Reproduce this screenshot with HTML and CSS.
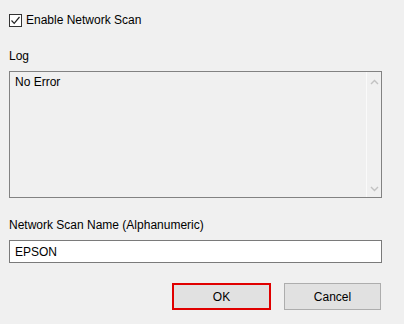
FILE: index.html
```html
<!DOCTYPE html>
<html>
<head>
<meta charset="utf-8">
<link rel="stylesheet" href="styles.css">
</head>
<body>
<div class="dialog">
  <label class="check-row">
    <span class="checkbox">
      <svg width="11" height="11" viewBox="0 0 11 11"><path d="M1.5 5.5 L4.2 8.3 L9.5 2" fill="none" stroke="#222" stroke-width="1.2"/></svg>
    </span>
    <span class="check-text">Enable Network Scan</span>
  </label>

  <div class="label log-label">Log</div>
  <div class="log-box">
    <div class="log-text">No Error</div>
    <div class="scrollbar">
      <svg class="arrow" width="9" height="6" viewBox="0 0 9 6"><path d="M1 5 L4.5 1.5 L8 5" fill="none" stroke="#c2c2c2" stroke-width="1.4"/></svg>
      <svg class="arrow" width="9" height="6" viewBox="0 0 9 6"><path d="M1 1 L4.5 4.5 L8 1" fill="none" stroke="#c2c2c2" stroke-width="1.4"/></svg>
    </div>
  </div>

  <div class="label name-label">Network Scan Name (Alphanumeric)</div>
  <div class="name-input">EPSON</div>

  <div class="buttons">
    <div class="btn btn-ok">OK</div>
    <div class="btn btn-cancel">Cancel</div>
  </div>
</div>
</body>
</html>
```

FILE: styles.css
```css
html, body {
  margin: 0;
  padding: 0;
  background: #f0f0f0;
}
body {
  font-family: "Liberation Sans", Arial, sans-serif;
  font-size: 12px;
  line-height: 14px;
  color: #000;
  width: 404px;
  height: 324px;
  overflow: hidden;
}
.dialog {
  display: flex;
  flex-direction: column;
  padding: 13px 22px 0 9px;
}
.check-row {
  display: flex;
  align-items: center;
  height: 14px;
}
.checkbox {
  width: 11px;
  height: 11px;
  border: 1px solid #333;
  background: #fff;
  display: flex;
  align-items: center;
  justify-content: center;
  margin-right: 4px;
}
.checkbox svg { display: block; }
.check-text { line-height: 14px; }
.label { height: 14px; }
.log-label { margin-top: 22px; }
.log-box {
  margin-top: 8px;
  height: 125px;
  border: 1px solid #828282;
  display: flex;
}
.log-text {
  flex: 1;
  padding: 3px 0 0 5px;
}
.scrollbar {
  width: 14px;
  border-left: 1px solid #fafafa;
  background: #f0f0f0;
  display: flex;
  flex-direction: column;
  justify-content: space-between;
  align-items: center;
  padding: 7px 0 5px;
}
.arrow { display: block; }
.name-label { margin-top: 20px; }
.name-input {
  margin-top: 8px;
  height: 17px;
  border: 1px solid #7a7a7a;
  background: #fff;
  padding: 4px 0 0 5px;
}
.buttons {
  display: flex;
  margin-top: 20px;
  margin-left: 163px;
  gap: 13px;
}
.btn {
  box-sizing: border-box;
  height: 27px;
  display: flex;
  align-items: center;
  justify-content: center;
  background: #e1e1e1;
}
.btn-ok {
  width: 99px;
  border: 2px solid #e00000;
}
.btn-cancel {
  width: 97px;
  border: 1px solid #adadad;
}
```
